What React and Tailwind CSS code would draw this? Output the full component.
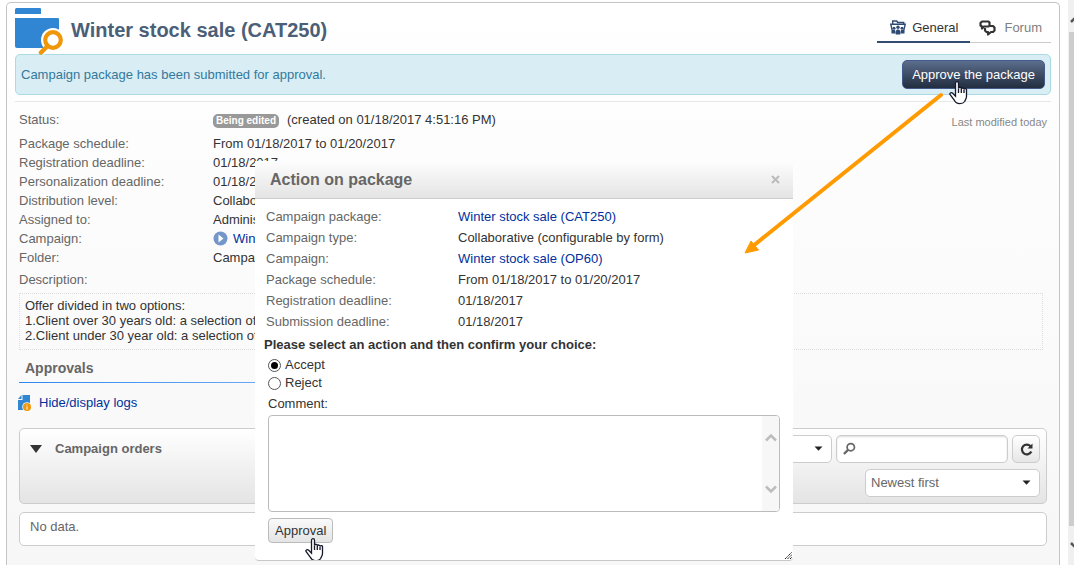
import React from "react";

const detailRows = [
  ["Package schedule:", "From 01/18/2017 to 01/20/2017"],
  ["Registration deadline:", "01/18/2017"],
  ["Personalization deadline:", "01/18/2017"],
  ["Distribution level:", "Collaborative"],
  ["Assigned to:", "Administrator"],
  ["Campaign:", "Winter stock sale", "link"],
  ["Folder:", "Campaigns"],
];

const packageRows = [
  ["Campaign package:", "Winter stock sale (CAT250)", "link"],
  ["Campaign type:", "Collaborative (configurable by form)"],
  ["Campaign:", "Winter stock sale (OP60)", "link"],
  ["Package schedule:", "From 01/18/2017 to 01/20/2017"],
  ["Registration deadline:", "01/18/2017"],
  ["Submission deadline:", "01/18/2017"],
];

function PackageIcon() {
  return (
    <svg width="49" height="48" viewBox="0 0 49 48" aria-hidden="true">
      <path d="M0 7V2.500Q0 1 1.500 1H25q1 0 1 1v5z" fill="#3086d2" />
      <path d="M0 11h43q1 0 1 1v28q0 1-1 1H2q-2 0-2-2z" fill="#3086d2" />
      <circle cx="38" cy="33" r="12" fill="#fff" />
      <path d="M31 38l-7 7 5 3 7-7z" fill="#fff" />
      <circle cx="38" cy="33" r="7.800" fill="#fff" stroke="#f09609" strokeWidth="4.200" />
      <path d="M32.500 39L26 45.500" stroke="#f09609" strokeWidth="4.500" strokeLinecap="round" />
    </svg>
  );
}

function GeneralIcon() {
  return (
    <svg width="16" height="15" viewBox="0 0 16 15" fill="none" aria-hidden="true">
      <path d="M2.700 4V1h4l1 1.500h6V4" stroke="#2f4b74" strokeWidth="1.400" />
      <path d="M2.500 11.500L.8 4.300h14.400l-1.700 7.200" stroke="#2f4b74" strokeWidth="1.400" />
      <g fill="#2f4b74">
        <circle cx="4" cy="8.300" r="1.500" />
        <circle cx="8" cy="7.300" r="1.700" />
        <circle cx="12" cy="8.300" r="1.500" />
        <path d="M1.500 13.500v-2.500l1.500-1h2l.5 3.500zM5.700 14.500V11l1.300-1.500h2l1.300 1.500v3.500zM14.500 13.500v-2.500l-1.500-1h-2l-.5 3.500z" />
      </g>
    </svg>
  );
}

function ForumIcon() {
  return (
    <svg width="17" height="16" viewBox="0 0 17 16" fill="none" stroke="#333" strokeWidth="2.200" strokeLinejoin="round" aria-hidden="true">
      <path d="M3 1.500h6.500l1 1v3l-1 1H5L3 8.500v-2L1.500 5.500V3z" />
      <path d="M11 6h3l1.500 1.500v3L14 12h-2l-3 2.500V12H7.500L6 10.500V8" />
    </svg>
  );
}

function LogIcon() {
  return (
    <svg width="14" height="16" viewBox="0 0 14 16" aria-hidden="true">
      <path d="M4.500 0H12v15H0V5h4.500z" fill="#3086d2" />
      <path d="M3.500 0v4H0z" fill="#3086d2" />
      <circle cx="9" cy="12" r="4.800" fill="#fafafa" />
      <circle cx="9" cy="12" r="4" fill="#f09609" />
      <path d="M9 9.500v1M9 11.500v3" stroke="#fff" strokeWidth="1" />
    </svg>
  );
}

function HandCursor({ className }) {
  return (
    <svg className={className} width="19" height="24" viewBox="0 0 19 24" aria-hidden="true">
      <path
        d="M6.500 2.200a1.500 1.500 0 0 1 3 0v5.300a1.400 1.400 0 0 1 2.800.4 1.400 1.400 0 0 1 2.700.6 1.300 1.300 0 0 1 2.500.8v6.200c0 2.500-1.500 3.500-1.800 5-1 1.500-3 2.200-5 2.200-3 0-4.500-1.500-5.500-3.700L1 13.500c-.6-1.500 1.500-2.400 2.700-1.200l2.800 2.900z"
        fill="#fff"
        stroke="#15192b"
        strokeWidth="1.300"
      />
      <path d="M9.500 7.500v4.500M12.300 8v4M15 9v3" stroke="#15192b" strokeWidth="1.300" />
    </svg>
  );
}

function Caret() {
  return (
    <svg className="pointer-events-none absolute right-[9px] top-[11px]" width="9" height="5" viewBox="0 0 9 5" aria-hidden="true">
      <path d="M0.500 0.500h8L4.500 4.800z" fill="#222" />
    </svg>
  );
}

function Tabs() {
  return (
    <nav className="mt-2 flex h-8 text-[13px]">
      <a href="#general" className="flex items-center gap-[6px] border-b-2 border-[#344b70] pt-[3px] pr-3 pl-[13px] text-[#333]">
        <GeneralIcon />
        General
      </a>
      <a href="#forum" className="flex items-center gap-2 border-b border-[#ccc] pt-[2px] pr-[9px] pl-[9px] text-[#808080]">
        <ForumIcon />
        Forum
      </a>
    </nav>
  );
}

function Details() {
  return (
    <dl className="mx-1 pt-px">
      <div className="flex h-[31px] items-center pt-[2px]">
        <dt className="w-[194px] text-[#666]">Status:</dt>
        <dd className="flex items-center gap-2">
          <span className="mt-[2px] rounded-[5px] bg-[#999] px-[3px] text-[10px] leading-[14px] font-bold text-white">Being edited</span>
          <span>(created on 01/18/2017 4:51:16 PM)</span>
        </dd>
        <dd className="ml-auto pt-[6px] text-[11px] text-[#888]">Last modified today</dd>
      </div>
      {detailRows.map(([label, value, kind]) => (
        <div key={label} className="flex h-[19px] items-center">
          <dt className="w-[194px] text-[#666]">{label}</dt>
          <dd>
            {kind ? (
              <a href="#campaign" className="flex items-center gap-[5px] text-[#00309c]">
                <svg width="15" height="15" viewBox="0 0 15 15" aria-hidden="true">
                  <circle cx="7.500" cy="7.500" r="7" fill="#7596c8" />
                  <path d="M5.500 3.500l5 4-5 4z" fill="#fff" />
                </svg>
                {value}
              </a>
            ) : (
              value
            )}
          </dd>
        </div>
      ))}
      <dt className="flex h-[26px] items-center text-[#666]">Description:</dt>
      <dd className="mr-1 border border-dotted border-[#ddd] px-[5px] pt-1 pb-[6px] leading-[15px]">
        Offer divided in two options:
        <br />
        1.Client over 30 years old: a selection of
        <br />
        2.Client under 30 year old: a selection of
      </dd>
    </dl>
  );
}

function Orders() {
  return (
    <section className="mx-1 mt-[5px]">
      <div className="flex justify-between rounded-[5px] border border-[#ccc] bg-linear-to-b from-white to-[#e4e4e4] px-[6px] pt-[6px] pb-[6px]">
        <button type="button" className="flex h-7 items-center gap-[13px] pl-1 text-[13px] font-bold text-[#666]">
          <svg width="12" height="8" viewBox="0 0 12 8" aria-hidden="true">
            <path d="M0 0h12L6 8z" fill="#333" />
          </svg>
          Campaign orders
        </button>
        <div className="flex flex-col items-end gap-[6px]">
          <div className="flex gap-1">
            <div className="relative">
              <select aria-label="Order filter" className="h-7 w-[150px] appearance-none rounded-[5px] border border-[#ccc] bg-white px-[5px]" />
              <Caret />
            </div>
            <label className="flex h-7 w-[172px] items-center rounded-[5px] border border-[#ccc] bg-white px-[6px] shadow-[inset_0_1px_2px_#ddd]">
              <svg width="14" height="14" viewBox="0 0 14 14" fill="none" stroke="#666" aria-hidden="true">
                <circle cx="8.500" cy="5" r="4" strokeWidth="1.900" />
                <path d="M5.500 8L1 12.500" strokeWidth="2.500" />
              </svg>
              <input aria-label="Search orders" className="w-full min-w-0 bg-transparent px-1 outline-none" />
            </label>
            <button type="button" aria-label="Refresh" className="flex h-7 w-7 items-center justify-center rounded-[5px] border border-[#ccc] bg-linear-to-b from-white to-[#e6e6e6]">
              <svg width="13" height="13" viewBox="0 0 13 13" fill="none" aria-hidden="true">
                <path d="M10.500 3.200A4.900 4.900 0 1 0 11.300 8.500" stroke="#333" strokeWidth="2.200" />
                <path d="M12.500 .5v5H7.500z" fill="#333" />
              </svg>
            </button>
          </div>
          <div className="relative">
            <select aria-label="Sort order" className="h-7 w-[175px] appearance-none rounded-[5px] border border-[#ccc] bg-white px-[5px] text-[13px] text-[#666]">
              <option>Newest first</option>
            </select>
            <Caret />
          </div>
        </div>
      </div>
      <p className="mt-2 rounded-[5px] border border-[#ccc] bg-white px-[10px] pt-[5px] pb-[9px] leading-[18px] text-[#666]">No data.</p>
    </section>
  );
}

function ActionDialog() {
  return (
    <section
      role="dialog"
      aria-labelledby="dialog-title"
      className="absolute top-[161px] left-[255px] w-[538px] overflow-hidden rounded-b-[4px] border-b border-[#c8c8c8] bg-white"
    >
      <header className="flex h-[38px] items-center justify-between border-b border-[#ccc] bg-linear-to-b from-[#fdfdfd] to-[#e4e4e4] pr-3 pl-[15px]">
        <h2 id="dialog-title" className="text-[16px] font-bold text-[#666]">Action on package</h2>
        <button type="button" aria-label="Close" className="p-px">
          <svg width="9" height="9" viewBox="0 0 9 9" aria-hidden="true">
            <path d="M1 1l7 7M8 1L1 8" stroke="#bbb" strokeWidth="2" />
          </svg>
        </button>
      </header>
      <form className="px-[13px] pt-[7px] pb-[17px]" onSubmit={(event) => event.preventDefault()}>
        <dl className="-mx-[2px]">
          {packageRows.map(([label, value, kind]) => (
            <div key={label} className="flex h-[21px] items-center">
              <dt className="w-[192px] text-[#666]">{label}</dt>
              <dd>{kind ? <a href="#package" className="text-[#00309c]">{value}</a> : value}</dd>
            </div>
          ))}
        </dl>
        <fieldset>
          <legend className="-ml-1 pt-[3px] pb-px leading-5 font-bold">Please select an action and then confirm your choice:</legend>
          {["Accept", "Reject"].map((name) => (
            <label key={name} className="flex h-[18px] items-center gap-1">
              <input
                type="radio"
                name="decision"
                defaultChecked={name === "Accept"}
                className="h-[13px] w-[13px] appearance-none rounded-full border border-[#555] bg-white bg-clip-content p-[2px] checked:bg-black"
              />
              {name}
            </label>
          ))}
        </fieldset>
        <label htmlFor="comment" className="block pt-1 leading-4">Comment:</label>
        <div className="mt-[3px] flex h-[97px] overflow-hidden rounded-[4px] border border-[#bbb]">
          <textarea id="comment" className="min-w-0 flex-1 resize-none p-1 outline-none" />
          <div className="flex w-[17px] flex-col items-center justify-between bg-[#f7f7f7] py-4">
            <svg width="12" height="10" viewBox="0 0 12 10" fill="none" aria-hidden="true">
              <path d="M1 8.500L6 3.500l5 5" stroke="#bdbdbd" strokeWidth="2.500" />
            </svg>
            <svg width="12" height="10" viewBox="0 0 12 10" fill="none" aria-hidden="true">
              <path d="M1 1.500l5 5 5-5" stroke="#bdbdbd" strokeWidth="2.500" />
            </svg>
          </div>
        </div>
        <button type="submit" className="mt-[6px] block h-[25px] rounded-[4px] border border-[#bbb] bg-linear-to-b from-[#fafafa] to-[#e4e4e4] px-[6px]">
          Approval
        </button>
      </form>
      <HandCursor className="absolute top-[377px] left-[50px]" />
      <svg className="absolute right-0 bottom-0" width="9" height="9" viewBox="0 0 9 9" aria-hidden="true">
        <path d="M1 8L8 1M3.500 8L8 3.500M6 8l2-2" stroke="#222" strokeWidth="1" strokeDasharray="1.400 .5" />
      </svg>
    </section>
  );
}

export default function App() {
  return (
    <div className="relative flex gap-2 overflow-hidden bg-white pl-[6px] font-['Liberation_Sans',Arial,sans-serif] text-[13px] text-[#333]">
      <main className="mt-[2px] min-w-0 flex-1 rounded-t-[5px] border border-b-0 border-[#c4c4c4] bg-linear-to-b from-white to-[#f7f7f7] px-2 pb-[19px]">
        <header className="flex h-[51px] justify-between">
          <div className="flex gap-[7px] pt-1">
            <PackageIcon />
            <h1 className="pt-[11px] text-[20px] leading-6 font-bold text-[#4b5f78]">Winter stock sale (CAT250)</h1>
          </div>
          <Tabs />
        </header>
        <div className="flex h-[41px] items-center justify-between rounded-[5px] border border-[#aadbe3] bg-[#d9edf5] px-[5px] text-[#33799b]">
          <p>Campaign package has been submitted for approval.</p>
          <button type="button" className="h-[29px] rounded-[5px] border border-[#44598a] bg-linear-to-b from-[#5c6e8e] to-[#222e40] px-[9px] text-[13px] text-white">
            Approve the package
          </button>
        </div>
        <hr className="mt-[6px] border-[#e8e8e8]" />
        <Details />
        <div className="mx-1 mt-[5px] w-1/2">
          <h2 className="pl-[6px] text-[14px] leading-[27px] font-bold text-[#666]">Approvals</h2>
          <div className="h-px bg-linear-to-r from-[#2b87f0] to-[#a5cdfb]" />
        </div>
        <a href="#logs" className="ml-[3px] inline-flex h-10 items-center gap-[7px] align-top text-[#00309c]">
          <LogIcon />
          Hide/display logs
        </a>
        <Orders />
      </main>
      <aside aria-hidden="true" className="flex w-[6px] flex-col overflow-hidden bg-[#f0f0f0]">
        <svg className="h-8 w-[6px] shrink-0" viewBox="0 0 6 32">
          <path d="M3 22l4-4" stroke="#555" strokeWidth="2.500" />
        </svg>
        <div className="ml-px flex-1 bg-[#cdcdcd]" />
        <svg className="h-[39px] w-[6px] shrink-0" viewBox="0 0 6 39">
          <path d="M3 17l4 4" stroke="#555" strokeWidth="2.500" />
        </svg>
      </aside>
      <ActionDialog />
      <HandCursor className="absolute top-[81px] left-[949px]" />
      <svg className="pointer-events-none absolute top-[90px] left-[740px]" width="206" height="168" viewBox="0 0 206 168" aria-hidden="true">
        <path d="M201 5L13 156" stroke="#ff9a00" strokeWidth="4" strokeLinecap="round" />
        <path d="M5 163l6-12 7.500 9z" fill="#ff9a00" stroke="#ff9a00" />
      </svg>
    </div>
  );
}
